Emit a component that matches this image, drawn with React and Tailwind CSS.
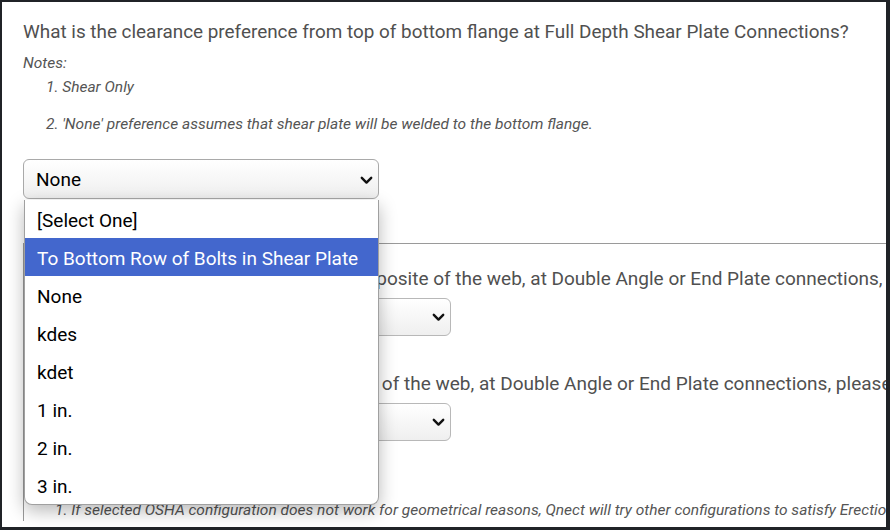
import React from "react";

const options = [
  "[Select One]",
  "To Bottom Row of Bolts in Shear Plate",
  "None",
  "kdes",
  "kdet",
  "1 in.",
  "2 in.",
  "3 in.",
];

function Chevron() {
  return (
    <svg width="13" height="9" viewBox="0 0 13 9" className="shrink-0">
      <path d="M1.8 1.8 L6.5 6.6 L11.2 1.8" fill="none" stroke="#111" strokeWidth="2.4" strokeLinecap="round" strokeLinejoin="round" />
    </svg>
  );
}

function SmallSelect() {
  return (
    <div className="mt-[6px] w-[415px] h-[38px] rounded-[6px] border border-[#b8b8b8] bg-gradient-to-b from-white to-[#efefef] flex items-center justify-end pr-[5px]">
      <Chevron />
    </div>
  );
}

export default function App() {
  return (
    <div
      className="w-[890px] h-[530px] bg-[#202327] pt-[2px] pl-[2px] pr-[4px] pb-[3px] overflow-hidden"
      style={{ fontFamily: "Roboto, 'Liberation Sans', sans-serif" }}
    >
      <div className="relative w-full h-full bg-white overflow-hidden pl-[21px]">
        <div className="pt-[16px] text-[18.9px] leading-[27px] text-[#505050] whitespace-nowrap">
          What is the clearance preference from top of bottom flange at Full Depth Shear Plate Connections?
        </div>
        <div className="mt-[8px] text-[15.5px] leading-[21px] italic text-[#555]">Notes:</div>
        <div className="pl-[23px] text-[15.5px] leading-[21px] italic text-[#555]">
          <div className="mt-[3px]">1. Shear Only</div>
          <div className="mt-[16px]">2. 'None' preference assumes that shear plate will be welded to the bottom flange.</div>
        </div>
        <div className="relative mt-[24px] w-[356px]">
          <div className="h-[40px] rounded-[6px] border border-[#a9a9a9] bg-gradient-to-b from-white to-[#efefef] flex items-center justify-between pl-[12px] pr-[5px] pt-[3px] text-[19px] text-black">
            <span>None</span>
            <Chevron />
          </div>
          <div className="absolute z-10 left-[1px] top-[41px] w-[355px] bg-white border border-[#a0a0a0] border-t-0 rounded-b-[8px] shadow-[0_6px_18px_rgba(0,0,0,0.28)] overflow-hidden">
            {options.map((o, i) => (
              <div
                key={o}
                className={
                  "h-[38px] flex items-center pl-[12px] pt-[4px] text-[19px] whitespace-nowrap " +
                  (i === 1 ? "bg-[#4367cd] text-white" : "text-black")
                }
              >
                {o}
              </div>
            ))}
          </div>
        </div>
        <div className="mt-[44px] border-t border-l border-[#9a9a9a] pl-[12px] pt-[21px] text-[19px] leading-[27px] text-[#505050] whitespace-nowrap">
          <div>What is the clearance for bolts on the opposite of the web, at Double Angle or End Plate connections, please select preference?</div>
          <SmallSelect />
          <div className="mt-[34px] pl-[11px]">What is the clearance on the same side of the web, at Double Angle or End Plate connections, please select preference?</div>
          <SmallSelect />
          <div className="mt-[35px] text-[15.5px] leading-[21px] italic text-[#555]">Notes:</div>
          <div className="mt-[3px] pl-[19px] text-[15.5px] leading-[21px] italic text-[#555]">
            1. If selected OSHA configuration does not work for geometrical reasons, Qnect will try other configurations to satisfy Erection requirements.
          </div>
        </div>
      </div>
    </div>
  );
}
